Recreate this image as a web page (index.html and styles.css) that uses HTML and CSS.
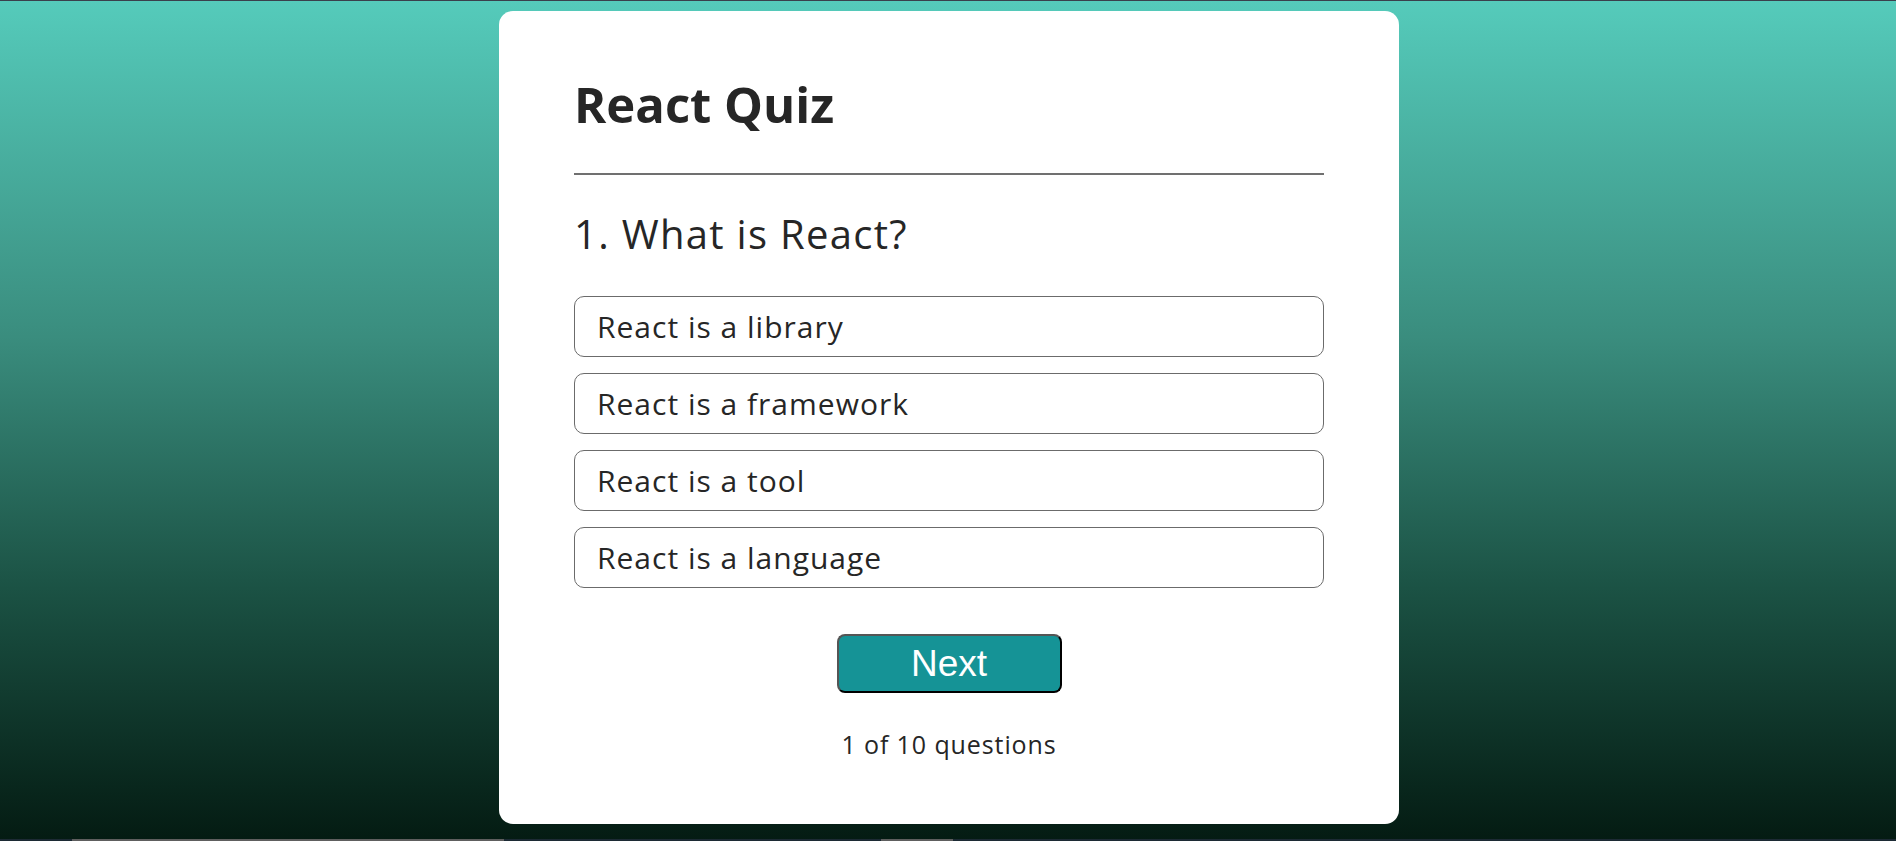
FILE: index.html
```html
<!DOCTYPE html>
<html lang="en">
<head>
<meta charset="utf-8">
<title>React Quiz</title>
<link rel="stylesheet" href="styles.css">
</head>
<body>
<div class="page">
  <div class="top-line"></div>
  <main class="stage">
    <section class="card">
      <h1 class="title">React Quiz</h1>
      <hr class="rule">
      <h2 class="question">1. What is React?</h2>
      <ul class="options">
        <li class="option">React is a library</li>
        <li class="option">React is a framework</li>
        <li class="option">React is a tool</li>
        <li class="option">React is a language</li>
      </ul>
      <button class="next" type="button">Next</button>
      <div class="index">1 of 10 questions</div>
    </section>
  </main>
  <div class="bottom-strip">
    <span class="gap-a"></span>
    <span class="seg seg-a"></span>
    <span class="gap-b"></span>
    <span class="seg seg-b"></span>
  </div>
</div>
</body>
</html>
```
FILE: styles.css
```css
* { box-sizing: border-box; }
html, body { margin: 0; padding: 0; }
body {
  font-family: "Open Sans", "DejaVu Sans", sans-serif;
  color: #262626;
}
.page {
  height: 841px;
  display: flex;
  flex-direction: column;
  background: linear-gradient(to bottom, #55cbbb 0%, #3a8d7e 40%, #1b5244 70%, #041b12 100%);
  overflow: hidden;
}
.top-line { height: 1px; background: #3a404c; flex: none; }
.stage {
  flex: 1;
  padding: 10px 0 0 2px;
}
.card {
  width: 900px;
  margin: 0 auto;
  background: #fff;
  border-radius: 14px;
  padding: 63px 75px 0;
  height: 813px;
  display: flex;
  flex-direction: column;
}
.title {
  margin: 0;
  font-size: 49px;
  line-height: 60px;
  font-weight: 700;
}
.rule {
  margin: 39px 0 0;
  height: 2px;
  border: none;
  background: #707070;
}
.question {
  margin: 34px 0 0;
  font-size: 40px;
  line-height: 50px;
  font-weight: 500;
  letter-spacing: 1.3px;
}
.options {
  list-style: none;
  margin: 37px 0 0;
  padding: 0;
  display: flex;
  flex-direction: column;
  gap: 16px;
}
.option {
  height: 61px;
  border: 1px solid #6b6b6b;
  border-radius: 10px;
  padding-left: 22px;
  font-size: 30px;
  line-height: 59px;
  letter-spacing: 1px;
}
.next {
  margin: 46px auto 0;
  width: 225px;
  height: 59px;
  background: #159396;
  color: #fff;
  border: 2px solid;
  border-color: #555555 #000 #000 #555555;
  border-radius: 8px;
  font-family: "Liberation Sans", Arial, sans-serif;
  font-size: 37px;
  line-height: 55px;
  padding: 0;
}
.index {
  margin-top: 36px;
  text-align: center;
  font-size: 25px;
  line-height: 30px;
  letter-spacing: 0.9px;
}
.bottom-strip {
  height: 2px;
  flex: none;
  display: flex;
  background: #1c2a34;
}
.gap-a { width: 72px; }
.seg { background: #5e5e5e; }
.seg-a { width: 432px; }
.gap-b { width: 377px; }
.seg-b { width: 72px; }
```
